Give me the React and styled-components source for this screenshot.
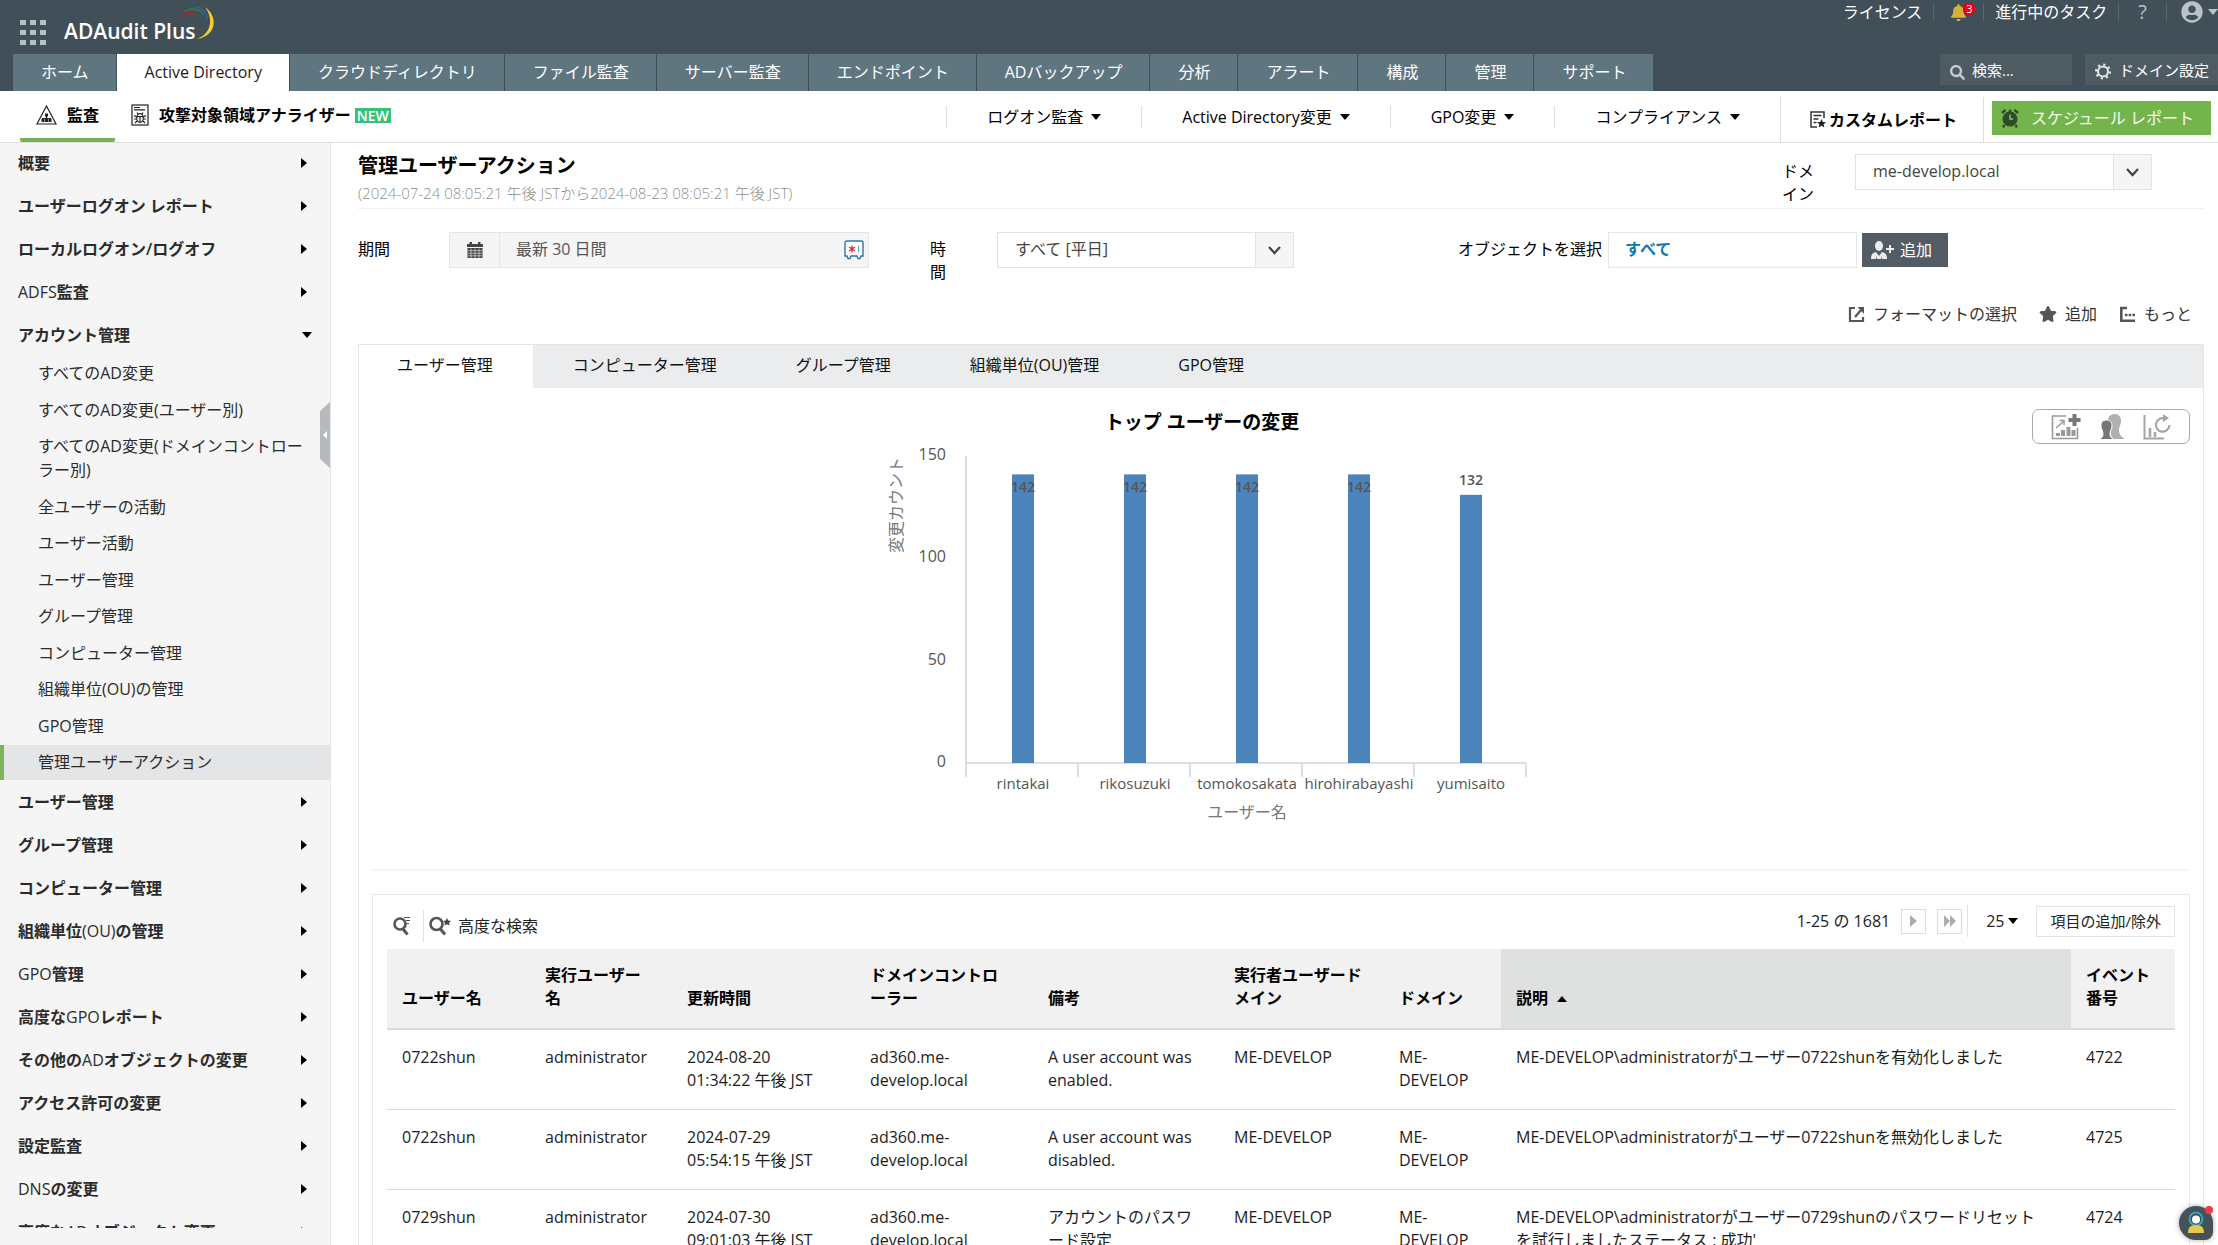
import React, { useState } from "react";
import styled, { createGlobalStyle, css } from "styled-components";
import { FaBell, FaStar, FaUserCircle, FaSearch } from "react-icons/fa";

const GlobalStyle = createGlobalStyle`
  *, *::before, *::after { box-sizing: border-box; }
  body {
    margin: 0;
    font-family: "Open Sans", "Noto Sans CJK JP", sans-serif;
    font-size: 16px;
    line-height: 24px;
    color: #1c1c1c;
    background: #fff;
    line-break: normal;
  }
  button, input, select { font: inherit; color: inherit; margin: 0; }
  button { background: none; border: 0; padding: 0; cursor: pointer; white-space: nowrap; }
  a { color: inherit; text-decoration: none; }
  ul { list-style: none; margin: 0; padding: 0; }
  svg { display: block; flex: none; }
`;

/* ---------- shared ---------- */

const Page = styled.div`
  height: 100vh;
  display: flex;
  flex-direction: column;
  overflow: hidden;
`;

const Caret = styled.i`
  flex: none;
  width: 0;
  height: 0;
  border: 5px solid transparent;
  ${({ $dir, $tone = "#000" }) => $dir === "down" && css`border-top: 6px solid ${$tone}; border-bottom: 0;`}
  ${({ $dir }) => $dir === "up" && css`border-bottom: 6px solid #000; border-top: 0;`}
  ${({ $dir }) => $dir === "right" && css`border-left: 6px solid #000; border-right: 0;`}
`;

/* ---------- header ---------- */

const Header = styled.header`
  background: #414f58;
  color: #fff;
`;

const TopBar = styled.div`
  height: 54px;
  display: flex;
  justify-content: space-between;
  align-items: flex-start;
  padding-left: 20px;
`;

const Brand = styled.a`
  display: flex;
  align-items: flex-start;
  padding-top: 5px;
`;

const BrandName = styled.span`
  padding: 12px 0 0 18px;
  font-size: 21px;
  line-height: 28px;
  font-weight: 600;
`;

const AppGrid = styled.span`
  display: grid;
  grid-template-columns: repeat(3, 6px);
  gap: 5px 4px;
  padding-top: 15px;
  i { height: 5px; background: #b4c1c9; }
`;

const Swoosh = styled.svg`
  margin-left: -20px;
`;

const UserMenu = styled.nav`
  display: flex;
  align-items: center;
  height: 24px;
`;

const UserMenuItem = styled.button`
  display: flex;
  align-items: center;
  justify-content: center;
  gap: 5px;
  height: 18px;
  padding: 0 ${({ $pad = 11, $flush }) => ($flush ? 0 : $pad)}px 0 ${({ $pad = 11 }) => $pad}px;
  position: relative;
  color: ${({ $muted }) => ($muted ? "#b9c3c9" : "#fff")};
  font-size: ${({ $big }) => ($big ? 20 : 16)}px;
  line-height: 20px;
  & + & { border-left: 1px solid #5a6870; }
`;

const Badge = styled.span`
  position: absolute;
  top: 0;
  right: 8px;
  min-width: 12px;
  padding: 0 2px;
  border-radius: 5px;
  background: #e60012;
  color: #fff;
  font-size: 11px;
  line-height: 12px;
`;

const NavRow = styled.div`
  display: flex;
  align-items: flex-start;
  padding-left: 13px;
`;

const NavTabs = styled.nav`
  display: flex;
  flex: 1;
`;

const NavTab = styled.a`
  height: 37px;
  padding: 0 27px 0 28px;
  line-height: 37px;
  white-space: nowrap;
  background: ${({ $active }) => ($active ? "#fff" : "#5f7580")};
  color: ${({ $active }) => ($active ? "#1c1c1c" : "#fff")};
  border-right: 1px solid #414f58;
`;

const SearchBox = styled.label`
  display: flex;
  align-items: center;
  gap: 7px;
  width: 132px;
  height: 31px;
  margin-right: 13px;
  padding: 0 10px;
  background: #4f5b63;
  color: #c3ccd1;
  font-size: 15px;
  svg { margin-top: 6px; }
  input {
    width: 80px;
    border: 0;
    padding: 0;
    outline: 0;
    background: transparent;
    color: #fff;
  }
  input::placeholder { color: #fff; opacity: 1; }
`;

const DomainSettings = styled.button`
  display: flex;
  align-items: center;
  gap: 8px;
  height: 31px;
  padding: 0 9px 0 10px;
  background: #4f5b63;
  color: #fff;
  font-size: 15px;
  svg { margin-top: 4px; }
`;

/* ---------- sub navigation ---------- */

const SubNav = styled.nav`
  display: flex;
  align-items: stretch;
  flex: none;
  height: 52px;
  padding: 0 7px 0 20px;
  border-bottom: 1px solid #dedede;
  color: #000;
`;

const SubTab = styled.a`
  display: flex;
  align-items: center;
  gap: 10px;
  padding: 1px 16px 0;
  font-weight: 700;
  border-bottom: 4px solid ${({ $active }) => ($active ? "#78b054" : "transparent")};
  border-radius: 2px;
`;

const NewTag = styled.span`
  margin-left: -6px;
  padding: 0 2px;
  background: #35c27b;
  color: #fff;
  font-size: 14px;
  line-height: 15px;
  font-weight: 600;
`;

const SubMenu = styled.div`
  display: flex;
  align-items: stretch;
  margin-left: auto;
`;

const SubMenuItem = styled.button`
  display: flex;
  align-items: center;
  align-self: center;
  gap: 8px;
  height: 22px;
  padding: 0 40px;
  border-left: 1px solid #dedede;
`;

const CustomReports = styled.a`
  display: flex;
  align-items: center;
  gap: 3px;
  margin-top: 6px;
  padding: 0 26px 0 29px;
  border: solid #dedede;
  border-width: 0 1px;
  font-weight: 700;
`;

const ScheduleButton = styled.button`
  display: flex;
  align-items: center;
  gap: 12px;
  height: 34px;
  margin: 10px 0 0 8px;
  padding: 0 17px 0 9px;
  background: #73b54c;
  color: #f4fbef;
`;

/* ---------- sidebar ---------- */

const Body = styled.div`
  display: flex;
  flex: 1;
  min-height: 0;
`;

const Sidebar = styled.aside`
  position: relative;
  flex: none;
  width: 331px;
  padding-bottom: 17px;
  background: #f5f5f5;
  border-right: 1px solid #e2e4e5;
`;

const SideScroll = styled.div`
  height: 100%;
  overflow: hidden;
`;

const SideGroup = styled.button`
  display: flex;
  justify-content: space-between;
  align-items: center;
  width: 100%;
  height: 43px;
  padding: 0 ${({ $open }) => ($open ? 18 : 23)}px 4px 18px;
  color: #2b2b2b;
  font-weight: 600;
`;

const Latin = styled.span`
  font-weight: 400;
`;

const SideSub = styled.ul`
  padding-bottom: 2px;
  li:nth-child(even) { padding-top: 1px; }
`;

const SideLink = styled.a`
  display: block;
  padding: 3px 18px 9px 38px;
  color: #2b2b2b;
  ${({ $active }) => $active && css`
    background: #e3e5e6;
    border-left: 4px solid #7cb65c;
    padding: 5px 18px 6px 34px;
    margin-top: -2px;
  `}
`;

const Collapse = styled.button`
  position: absolute;
  right: 0;
  top: 259px;
  width: 10px;
  height: 66px;
`;

/* ---------- main ---------- */

const Main = styled.main`
  flex: 1;
  min-width: 0;
  padding: 0 14px 0 27px;
  overflow: hidden;
`;

const PageHead = styled.div`
  display: flex;
  justify-content: space-between;
  padding: 9px 52px 2px 0;
  border-bottom: 1px solid #f1f1f1;
`;

const Title = styled.h1`
  margin: 0;
  font-size: 20px;
  line-height: 28px;
  font-weight: 600;
  color: #000;
`;

const Subtitle = styled.p`
  margin: 0;
  font-size: 15px;
  line-height: 26px;
  font-weight: 300;
  color: #8f8f8f;
`;

const DomainPick = styled.div`
  display: flex;
  gap: 33px;
  padding-top: 2px;
`;

const FieldLabel = styled.label`
  width: ${({ $w }) => $w}px;
  padding-top: 6px;
  line-height: 23px;
  color: #000;
  white-space: ${({ $nowrap }) => ($nowrap ? "nowrap" : "normal")};
`;

const SelectWrap = styled.span`
  display: flex;
  position: relative;
  width: 297px;
  height: 36px;
  select {
    width: 100%;
    appearance: none;
    padding: 0 50px 2px 17px;
    border: 1px solid #e3e3e3;
    border-radius: 0;
    background: linear-gradient(to right, transparent calc(100% - 38px), #e3e3e3 calc(100% - 38px), #e3e3e3 calc(100% - 37px), #f5f5f5 calc(100% - 37px)) #fff;
    color: #444;
  }
  svg {
    position: absolute;
    right: 13px;
    top: 14px;
    pointer-events: none;
  }
`;

const Filters = styled.form`
  display: flex;
  padding-top: 23px;
  height: 76px;
`;

const DateField = styled.div`
  display: flex;
  align-items: center;
  width: 420px;
  height: 36px;
  margin-right: 61px;
  padding-right: 4px;
  background: #f5f5f5;
  border: 1px solid #e3e7e8;
  color: #555;
  button { width: 50px; height: 34px; display: grid; place-items: center; border-right: 1px solid #e3e7e8; }
  input { flex: 1; border: 0; padding: 0 0 3px 16px; background: transparent; outline: 0; }
`;

const HoursGap = styled.span`
  width: 43px;
`;

const ObjectGap = styled.span`
  width: 164px;
`;

const ObjectField = styled.input`
  width: 249px;
  height: 36px;
  padding: 0 16px 5px;
  border: 1px solid #e6e6e6;
  outline: 0;
  && { color: #0a7cb5; font-weight: 700; }
`;

const AddButton = styled.button`
  display: flex;
  align-items: center;
  gap: 6px;
  height: 34px;
  margin: 1px 0 0 5px;
  padding: 0 16px 1px 9px;
  background: #535c64;
  color: #fff;
`;

const Actions = styled.div`
  display: flex;
  justify-content: flex-end;
  gap: 22px;
  padding: 17px 12px 18px 0;
`;

const ActionButton = styled.button`
  display: flex;
  align-items: center;
  gap: 8px;
  color: #333;
  svg { color: #555; }
`;

const Panel = styled.section`
  border: 1px solid #e6e8e9;
  border-top-color: #e3e5e6;
`;

const PanelTabs = styled.div`
  display: flex;
  background: #ebeced;
`;

const PanelTab = styled.button`
  height: 43px;
  padding: 0 40px 3px 38px;
  color: #111;
  background: ${({ $active }) => ($active ? "#fff" : "transparent")};
  & + & { padding: 0 39px 3px 40px; }
`;

const ChartRow = styled.div`
  display: flex;
  align-items: flex-start;
  margin: 0 13px;
  padding: 10px 0 31px;
  border-bottom: 2px solid #f5f5f5;
`;

const ChartArea = styled.div`
  flex: 1;
  display: flex;
  justify-content: center;
`;

const ChartTools = styled.div`
  display: flex;
  align-items: center;
  gap: 18px;
  height: 35px;
  margin-top: 11px;
  padding: 0 18px;
  border: 1px solid #a9a9a9;
  border-radius: 7px;
`;

const TableCard = styled.section`
  margin: 23px 13px 0;
  padding: 0 14px;
  border: 1px solid #e6e6e6;
`;

const TableBar = styled.div`
  display: flex;
  align-items: center;
  justify-content: space-between;
  height: 54px;
  color: #222;
`;

const BarGroup = styled.div`
  display: flex;
  align-items: center;
  padding-bottom: ${({ $raise = 0 }) => $raise}px;
  padding-top: ${({ $drop = 0 }) => $drop}px;
`;

const BarButton = styled.button`
  display: flex;
  align-items: center;
  gap: 7px;
  height: 32px;
  padding: 0 6px 0 5px;
  color: #222;
  & + & { margin-left: 6px; border-left: 1px solid #e2e2e2; }
`;

const PageButton = styled.button`
  display: grid;
  place-items: center;
  width: 25px;
  height: 25px;
  margin-left: 11px;
  border: 1px solid #d9dede;
`;

const PageSize = styled.button`
  display: flex;
  align-items: center;
  gap: 4px;
  height: 32px;
  margin: 0 18px 0 5px;
  padding-left: 18px;
  border-left: 1px solid #e2e2e2;
`;

const ColumnsButton = styled.button`
  height: 31px;
  padding: 0 13px;
  border: 1px solid #dfe3e3;
  font-size: 15px;
`;

const Table = styled.table`
  width: 100%;
  table-layout: fixed;
  border-collapse: collapse;
  line-height: 23px;
  text-align: left;
`;

const Th = styled.th`
  height: 80px;
  padding: 14px 20px 18px 15px;
  vertical-align: bottom;
  font-weight: 700;
  color: #000;
  background: ${({ $sorted }) => ($sorted ? "#dfe1e1" : "#f1f1f1")};
  border-bottom: 2px solid #dadcdc;
`;

const SortLabel = styled.span`
  display: flex;
  align-items: center;
  gap: 9px;
`;

const Td = styled.td`
  padding: 16px ${({ $wide }) => ($wide ? 30 : 20)}px 17px 15px;
  vertical-align: top;
  border-bottom: 1px solid #d9d9d9;
`;

const Assistant = styled.button`
  position: fixed;
  right: 5px;
  bottom: 5px;
  width: 34px;
  height: 34px;
  border-radius: 17px 17px 8px 17px;
  background: #46525a;
  box-shadow: 0 0 5px rgba(0, 0, 0, 0.35);
  display: grid;
  place-items: center;
`;

const AlertDot = styled.i`
  position: absolute;
  top: 0;
  right: 0;
  width: 8px;
  height: 8px;
  border-radius: 50%;
  background: #f03a47;
`;

/* ---------- icons ---------- */

const GearIcon = () => (
  <svg width="16" height="17" viewBox="0 0 16 17" fill="none" stroke="#e3e9ec">
    <circle cx="8" cy="8.5" r="5" strokeWidth="2" />
    <circle cx="8" cy="8.5" r="7" strokeWidth="2" strokeDasharray="2.2 3.3" />
  </svg>
);
const AuditIcon = () => (
  <svg width="21" height="20" viewBox="0 0 21 20" fill="none" stroke="#222" strokeWidth="1.2">
    <path d="M10.5 1 20 19H1Z" />
    <path d="M10.5 11v3M6.5 15v-1.5h8V15" />
    <path fill="#222" stroke="none" d="M9 8.5h3v3H9zM5.5 14h3v3h-3zM9 14h3v3H9zM12.500 14h3v3h-3z" />
  </svg>
);
const BugDocIcon = () => (
  <svg width="18" height="22" viewBox="0 0 18 22" fill="none" stroke="#222" strokeWidth="1.2">
    <rect x="1" y="1" width="16" height="20" />
    <path d="M3 3.500h6M3 5.800h11" />
    <ellipse cx="9" cy="14" rx="3.300" ry="4.300" />
    <path d="M9 12.500v5.500M5.800 12.500h6.400M7 10 6 8.500M11 10l1-1.500M5.600 13 3 11.500M12.400 13l2.600-1.500M5.600 15H3M12.400 15H15M6 17l-2 2M12 17l2 2" />
  </svg>
);
const ReportStarIcon = () => (
  <svg width="16" height="17" viewBox="0 0 16 17" fill="none" stroke="#333" strokeWidth="1.500">
    <path d="M14 7V1H1v15h6M3.500 4.500h8M3.500 8h5M3.500 11.500h3" />
    <path fill="#222" stroke="none" d="m11.500 8 1.300 2.900 3.200.3-2.400 2.100.7 3.200-2.800-1.700-2.800 1.700.7-3.200L7 11.200l3.200-.3Z" />
  </svg>
);
const AlarmIcon = () => (
  <svg width="18" height="20" viewBox="0 0 18 20">
    <circle cx="9" cy="11" r="7.500" fill="#2f4a2c" />
    <path d="M1 5 4.500 1.800M17 5l-3.500-3.200M3.500 17 2 19.300M14.500 17l1.500 2.300M9 1.500V4" stroke="#2f4a2c" strokeWidth="2.400" />
    <path d="M9 6.500V11h3" fill="none" stroke="#8fcf6c" strokeWidth="1.300" />
  </svg>
);
const CalendarIcon = () => (
  <svg width="16" height="16" viewBox="0 0 16 16" fill="#444">
    <path d="M0 2h2.500V0h2.500v2h6V0h2.500v2H16v3H0z" />
    <path d="M0.500 6h15v10h-15z" />
    <path d="M1 8.700h14M1 11.300h14M1 13.800h14M4 6.500V16M8 6.500V16M12 6.500V16" stroke="#f5f5f5" strokeWidth=".6" />
  </svg>
);
const CardIcon = () => (
  <svg width="20" height="20" viewBox="0 0 20 20" fill="none">
    <path d="M3 1h14q2 0 2 2v13h-2l-1 2.500h-2L13 16H7l-1 2.500H4L3 16H1V3q0-2 2-2Z" fill="#fff" stroke="#3273a8" strokeWidth="1.400" />
    <path d="M8 5.500v7M5 7l6 4M11 7l-6 4" stroke="#e02b3c" strokeWidth="1.400" />
    <path d="M14.500 5.500v7" stroke="#7a9dba" />
  </svg>
);
const ChevronIcon = () => (
  <svg width="13" height="9" viewBox="0 0 13 9" fill="none" stroke="#444" strokeWidth="2.200">
    <path d="m1 1 5.500 6L12 1" />
  </svg>
);
const AddUserIcon = () => (
  <svg width="23" height="18" viewBox="0 0 23 18" fill="#e9edf0">
    <ellipse cx="8" cy="5" rx="4" ry="5" />
    <path d="M0 18c0-5 2-6.500 5-7l3 4 3-4c3 .5 5 2 5 7h-5l-1-3v3H6v-3l-1 3Z" />
    <path d="M18 4h2v3h3v2h-3v3h-2V9h-3V7h3z" />
  </svg>
);
const ExportIcon = () => (
  <svg width="17" height="17" viewBox="0 0 17 17" fill="none" stroke="currentColor" strokeWidth="2.200">
    <path d="M7 2H2v13h13v-4" />
    <path d="m7 11 6-7" />
    <path d="M9.500 1H16v7Z" fill="currentColor" stroke="none" />
  </svg>
);
const MoreIcon = () => (
  <svg width="17" height="17" viewBox="0 0 17 17" fill="none" stroke="currentColor" strokeWidth="2.600">
    <path d="M8 2H2.300v12.700H16" />
    <path d="M6 9h10" strokeDasharray="2.500 1.200" />
  </svg>
);
const SearchListIcon = () => (
  <svg width="19" height="20" viewBox="0 0 19 20" fill="none" stroke="#555">
    <circle cx="8" cy="8" r="5.500" strokeWidth="2.600" />
    <path d="m10.500 12.500 5 6" strokeWidth="3" />
    <path d="M12 1.500h6M14 4.500h4M14 7.500h3" strokeWidth="1.200" />
  </svg>
);
const SearchStarIcon = () => (
  <svg width="22" height="20" viewBox="0 0 22 20" fill="none" stroke="#555">
    <circle cx="7.500" cy="8" r="6" strokeWidth="2.600" />
    <path d="m11 12.500 5 6" strokeWidth="3" />
    <path d="m18 2 1.200 2.600 2.800.3-2 1.900.6 2.800L18 8.200l-2.600 1.400.6-2.800-2-1.900 2.800-.3Z" fill="#444" stroke="none" />
  </svg>
);
const ChartAddIcon = () => (
  <svg width="30" height="26" viewBox="0 0 30 26" fill="none" stroke="#9a9a9a">
    <path d="M15 2H1.500v22.500h25V14" strokeWidth="1.600" />
    <path d="m5 14 8-7M8.500 6.500H13V11" strokeWidth="1.500" />
    <path d="M7 19v3M12 16v6M17.500 13v9M22.500 16v6" strokeWidth="4" />
    <path d="M23.500 0v12M17.500 6h12" strokeWidth="4" stroke="#777" />
  </svg>
);
const PeopleIcon = () => (
  <svg width="26" height="26" viewBox="0 0 26 26">
    <path fill="#b0b0b0" d="M9 7C9 2 12 0 16 0s6.500 3 6 8c-.3 3-2 5-2 8s1 6 6 9H13Z" />
    <path fill="#777" stroke="#fff" d="M2 12c0-4 2-6 5.500-6S13 8 13 12c0 3-2 5-2 8 0 2 1 4 4 5.500H0C3 24 4 22 4 20c0-3-2-5-2-8Z" />
  </svg>
);
const ChartRefreshIcon = () => (
  <svg width="28" height="26" viewBox="0 0 28 26" fill="none" stroke="#a5a5a5">
    <path d="M1.500 1v23.500H21" strokeWidth="2" />
    <path d="M7 14v9M12 18v5" strokeWidth="2.500" />
    <path d="M22 4.500A6.800 6.800 0 1 0 26.500 11" strokeWidth="2.200" />
    <path d="M20 0v8l6-4Z" fill="#a5a5a5" stroke="none" />
  </svg>
);

/* ---------- data ---------- */

const NAV = ["ホーム", "Active Directory", "クラウドディレクトリ", "ファイル監査", "サーバー監査", "エンドポイント", "ADバックアップ", "分析", "アラート", "構成", "管理", "サポート"];
const SUB_MENU = ["ログオン監査", "Active Directory変更", "GPO変更", "コンプライアンス"];
const GROUPS = [
  { name: "概要" },
  { name: "ユーザーログオン レポート" },
  { name: "ローカルログオン/ログオフ" },
  { name: "ADFS監査" },
  {
    name: "アカウント管理",
    items: ["すべてのAD変更", "すべてのAD変更(ユーザー別)", "すべてのAD変更(ドメインコントローラー別)", "全ユーザーの活動", "ユーザー活動", "ユーザー管理", "グループ管理", "コンピューター管理", "組織単位(OU)の管理", "GPO管理", "管理ユーザーアクション"],
  },
  { name: "ユーザー管理" },
  { name: "グループ管理" },
  { name: "コンピューター管理" },
  { name: "組織単位(OU)の管理" },
  { name: "GPO管理" },
  { name: "高度なGPOレポート" },
  { name: "その他のADオブジェクトの変更" },
  { name: "アクセス許可の変更" },
  { name: "設定監査" },
  { name: "DNSの変更" },
  { name: "高度なADオブジェクト変更" },
];
const PANEL_TABS = ["ユーザー管理", "コンピューター管理", "グループ管理", "組織単位(OU)管理", "GPO管理"];
const BARS = [
  { user: "rintakai", count: 142 },
  { user: "rikosuzuki", count: 142 },
  { user: "tomokosakata", count: 142 },
  { user: "hirohirabayashi", count: 142 },
  { user: "yumisaito", count: 132 },
];
const COLUMNS = [
  { name: "ユーザー名", width: 143 },
  { name: "実行ユーザー名", width: 142 },
  { name: "更新時間", width: 183 },
  { name: "ドメインコントローラー", width: 178 },
  { name: "備考", width: 186 },
  { name: "実行者ユーザードメイン", width: 165 },
  { name: "ドメイン", width: 117 },
  { name: "説明", sorted: true },
  { name: "イベント番号", width: 104 },
];
const ROWS = [
  ["0722shun", "administrator", "2024-08-20 01:34:22 午後 JST", "ad360.me-develop.local", "A user account was enabled.", "ME-DEVELOP", "ME-DEVELOP", "ME-DEVELOP\\administratorがユーザー0722shunを有効化しました", "4722"],
  ["0722shun", "administrator", "2024-07-29 05:54:15 午後 JST", "ad360.me-develop.local", "A user account was disabled.", "ME-DEVELOP", "ME-DEVELOP", "ME-DEVELOP\\administratorがユーザー0722shunを無効化しました", "4725"],
  ["0729shun", "administrator", "2024-07-30 09:01:03 午後 JST", "ad360.me-develop.local", "アカウントのパスワード設定", "ME-DEVELOP", "ME-DEVELOP", "ME-DEVELOP\\administratorがユーザー0729shunのパスワードリセットを試行しましたステータス : 成功'", "4724"],
];

/* ---------- chart ---------- */

const ChartTitle = styled.text`
  font-size: 19px;
  font-weight: 700;
  text-anchor: middle;
  fill: #000;
`;
const ChartText = styled.text`
  font-size: ${({ $size = 16 }) => $size}px;
  font-weight: ${({ $bold }) => ($bold ? 600 : 400)};
  text-anchor: ${({ $end }) => ($end ? "end" : "middle")};
  fill: ${({ $light }) => ($light ? "#777" : "#555")};
`;

function UserChart() {
  const left = 94;
  const step = 112;
  const base = 365;
  const scale = 307 / 150;
  return (
    <svg width="660" height="440" viewBox="0 0 660 440" role="img" aria-label="トップ ユーザーの変更">
      <ChartTitle x="330" y="31">トップ ユーザーの変更</ChartTitle>
      {[0, 50, 100, 150].map((v) => (
        <ChartText key={v} $end x="74" y={base + 4 - v * scale}>{v}</ChartText>
      ))}
      <ChartText $light transform="rotate(-90 30 107)" x="30" y="107">変更カウント</ChartText>
      <path d={`M${left} 58V${base}H${left + step * 5}`} fill="none" stroke="#cfd6da" strokeWidth="1.500" />
      {[0, 1, 2, 3, 4, 5].map((i) => (
        <path key={i} d={`M${left + step * i} ${base}v14`} stroke="#cfd6da" strokeWidth="1.500" />
      ))}
      {BARS.map(({ user, count }, i) => {
        const x = left + step * i + 57;
        const top = base - count * scale + 2;
        return (
          <g key={user}>
            <rect x={x - 11} y={top} width="22" height={base - top} fill="#4b83bb" />
            <ChartText $bold $size={14} x={x} y={count > 140 ? top + 18 : top - 10}>{count}</ChartText>
            <ChartText $size={15} x={x} y="391">{user}</ChartText>
          </g>
        );
      })}
      <ChartText $light x="375" y="420">ユーザー名</ChartText>
    </svg>
  );
}

/* ---------- app ---------- */

function Picker({ id, options }) {
  return (
    <SelectWrap>
      <select id={id}>{options.map((o) => <option key={o}>{o}</option>)}</select>
      <ChevronIcon />
    </SelectWrap>
  );
}

/* Group names are bold in Japanese, with product terms such as GPO in regular weight. */
function GroupName({ text }) {
  return (
    <span>
      {text.split(/([A-Z()]+)/).map((part, i) => (i % 2 ? <Latin key={i}>{part}</Latin> : part))}
    </span>
  );
}

export default function App() {
  const [tab, setTab] = useState(0);
  return (
    <Page>
      <GlobalStyle />
      <Header>
        <TopBar>
          <Brand href="#">
            <AppGrid>{Array.from({ length: 9 }, (_, i) => <i key={i} />)}</AppGrid>
            <BrandName>ADAudit Plus</BrandName>
            <Swoosh width="40" height="36" viewBox="0 0 40 36" fill="none">
              <path d="M3 14C7 5 18 4 24 11 18 7 9 7 3 14Z" fill="#b3202c" />
              <path d="M7 8C13 0 25 2 28 11 23 4 15 3 7 8Z" fill="#2f7d43" />
              <path d="M17 2C27 0 33 8 32 17 30 8 26 3 17 2Z" fill="#2c62ad" />
              <path d="M29 2C43 12 40 31 21 34 35 29 38 14 29 2Z" fill="#f3cf2f" />
            </Swoosh>
          </Brand>
          <UserMenu>
            <UserMenuItem>ライセンス</UserMenuItem>
            <UserMenuItem $pad={16} aria-label="通知"><FaBell size={17} color="#d6b13a" /><Badge>3</Badge></UserMenuItem>
            <UserMenuItem>進行中のタスク</UserMenuItem>
            <UserMenuItem $pad={19} $muted $big>?</UserMenuItem>
            <UserMenuItem $pad={14} $flush $muted aria-label="アカウント"><FaUserCircle size={22} /><Caret $dir="down" $tone="#b9c3c9" /></UserMenuItem>
          </UserMenu>
        </TopBar>
        <NavRow>
          <NavTabs>
            {NAV.map((n, i) => <NavTab key={n} href="#" $active={i === 1}>{n}</NavTab>)}
          </NavTabs>
          <SearchBox>
            <FaSearch size={15} />
            <input aria-label="検索" placeholder="検索..." />
          </SearchBox>
          <DomainSettings><GearIcon />ドメイン設定</DomainSettings>
        </NavRow>
      </Header>

      <SubNav>
        <SubTab href="#" $active><AuditIcon />監査</SubTab>
        <SubTab href="#"><BugDocIcon />攻撃対象領域アナライザー<NewTag>NEW</NewTag></SubTab>
        <SubMenu>
          {SUB_MENU.map((m) => <SubMenuItem key={m}>{m}<Caret $dir="down" /></SubMenuItem>)}
          <CustomReports href="#"><ReportStarIcon />カスタムレポート</CustomReports>
          <ScheduleButton><AlarmIcon />スケジュール レポート</ScheduleButton>
        </SubMenu>
      </SubNav>

      <Body>
        <Sidebar>
          <SideScroll>
            {GROUPS.map(({ name, items }, g) => (
              <React.Fragment key={g}>
                <SideGroup $open={!!items}><GroupName text={name} /><Caret $dir={items ? "down" : "right"} /></SideGroup>
                {items && (
                  <SideSub>
                    {items.map((it, i) => (
                      <li key={it}><SideLink href="#" $active={i === items.length - 1}>{it}</SideLink></li>
                    ))}
                  </SideSub>
                )}
              </React.Fragment>
            ))}
          </SideScroll>
          <Collapse aria-label="サイドバーを閉じる">
            <svg width="10" height="66" viewBox="0 0 10 66">
              <path d="M10 0v66L0 57V9Z" fill="#b7babc" />
              <path d="M7 29v8l-4-4Z" fill="#fff" />
            </svg>
          </Collapse>
        </Sidebar>

        <Main>
          <PageHead>
            <div>
              <Title>管理ユーザーアクション</Title>
              <Subtitle>(2024-07-24 08:05:21 午後 JSTから2024-08-23 08:05:21 午後 JST)</Subtitle>
            </div>
            <DomainPick>
              <FieldLabel htmlFor="domain" $w={40}>ドメイン</FieldLabel>
              <Picker id="domain" options={["me-develop.local"]} />
            </DomainPick>
          </PageHead>

          <Filters onSubmit={(e) => e.preventDefault()}>
            <FieldLabel htmlFor="period" $w={91}>期間</FieldLabel>
            <DateField>
              <button type="button" aria-label="カレンダー"><CalendarIcon /></button>
              <input id="period" readOnly value="最新 30 日間" />
              <CardIcon />
            </DateField>
            <FieldLabel htmlFor="hours" $w={24}>時間</FieldLabel>
            <HoursGap />
            <Picker id="hours" options={["すべて [平日]"]} />
            <ObjectGap />
            <FieldLabel htmlFor="object" $w={150} $nowrap>オブジェクトを選択</FieldLabel>
            <ObjectField id="object" readOnly value="すべて" />
            <AddButton type="button"><AddUserIcon />追加</AddButton>
          </Filters>

          <Actions>
            <ActionButton><ExportIcon />フォーマットの選択</ActionButton>
            <ActionButton><FaStar size={18} />追加</ActionButton>
            <ActionButton><MoreIcon />もっと</ActionButton>
          </Actions>

          <Panel>
            <PanelTabs role="tablist">
              {PANEL_TABS.map((t, i) => (
                <PanelTab key={t} role="tab" aria-selected={tab === i} $active={tab === i} onClick={() => setTab(i)}>{t}</PanelTab>
              ))}
            </PanelTabs>
            <ChartRow>
              <ChartArea><UserChart /></ChartArea>
              <ChartTools>
                <button aria-label="グラフを追加"><ChartAddIcon /></button>
                <button aria-label="ユーザー"><PeopleIcon /></button>
                <button aria-label="グラフを更新"><ChartRefreshIcon /></button>
              </ChartTools>
            </ChartRow>

            <TableCard>
              <TableBar>
                <BarGroup $drop={8}>
                  <BarButton aria-label="検索"><SearchListIcon /></BarButton>
                  <BarButton><SearchStarIcon />高度な検索</BarButton>
                </BarGroup>
                <BarGroup $raise={2}>
                  <span>1-25 の 1681</span>
                  <PageButton aria-label="次へ">
                    <svg width="7" height="12" viewBox="0 0 7 12"><path d="M0 0v12l7-6Z" fill="#a9aeae" /></svg>
                  </PageButton>
                  <PageButton aria-label="最後へ">
                    <svg width="12" height="12" viewBox="0 0 12 12"><path d="M0 0v12l6-6ZM6 0v12l6-6Z" fill="#a9aeae" /></svg>
                  </PageButton>
                  <PageSize>25<Caret $dir="down" /></PageSize>
                  <ColumnsButton>項目の追加/除外</ColumnsButton>
                </BarGroup>
              </TableBar>
              <Table>
                <colgroup>
                  {COLUMNS.map((c) => <col key={c.name} width={c.width} />)}
                </colgroup>
                <thead>
                  <tr>
                    {COLUMNS.map((c) => (
                      <Th key={c.name} scope="col" $sorted={c.sorted}>
                        {c.sorted ? <SortLabel>{c.name}<Caret $dir="up" /></SortLabel> : c.name}
                      </Th>
                    ))}
                  </tr>
                </thead>
                <tbody>
                  {ROWS.map((r, i) => (
                    <tr key={i}>{r.map((v, j) => <Td key={j} $wide={COLUMNS[j].sorted}>{v}</Td>)}</tr>
                  ))}
                </tbody>
              </Table>
            </TableCard>
          </Panel>
        </Main>
      </Body>

      <Assistant aria-label="アシスタント">
        <svg width="20" height="24" viewBox="0 0 20 24">
          <circle cx="10" cy="8" r="6.500" fill="none" stroke="#37b6c8" strokeWidth="1.500" />
          <circle cx="10" cy="8.500" r="4" fill="#fff" />
          <path d="M2 22c0-6 3-8 8-8s8 2 8 8Z" fill="#e8c84a" />
        </svg>
        <AlertDot />
      </Assistant>
    </Page>
  );
}
